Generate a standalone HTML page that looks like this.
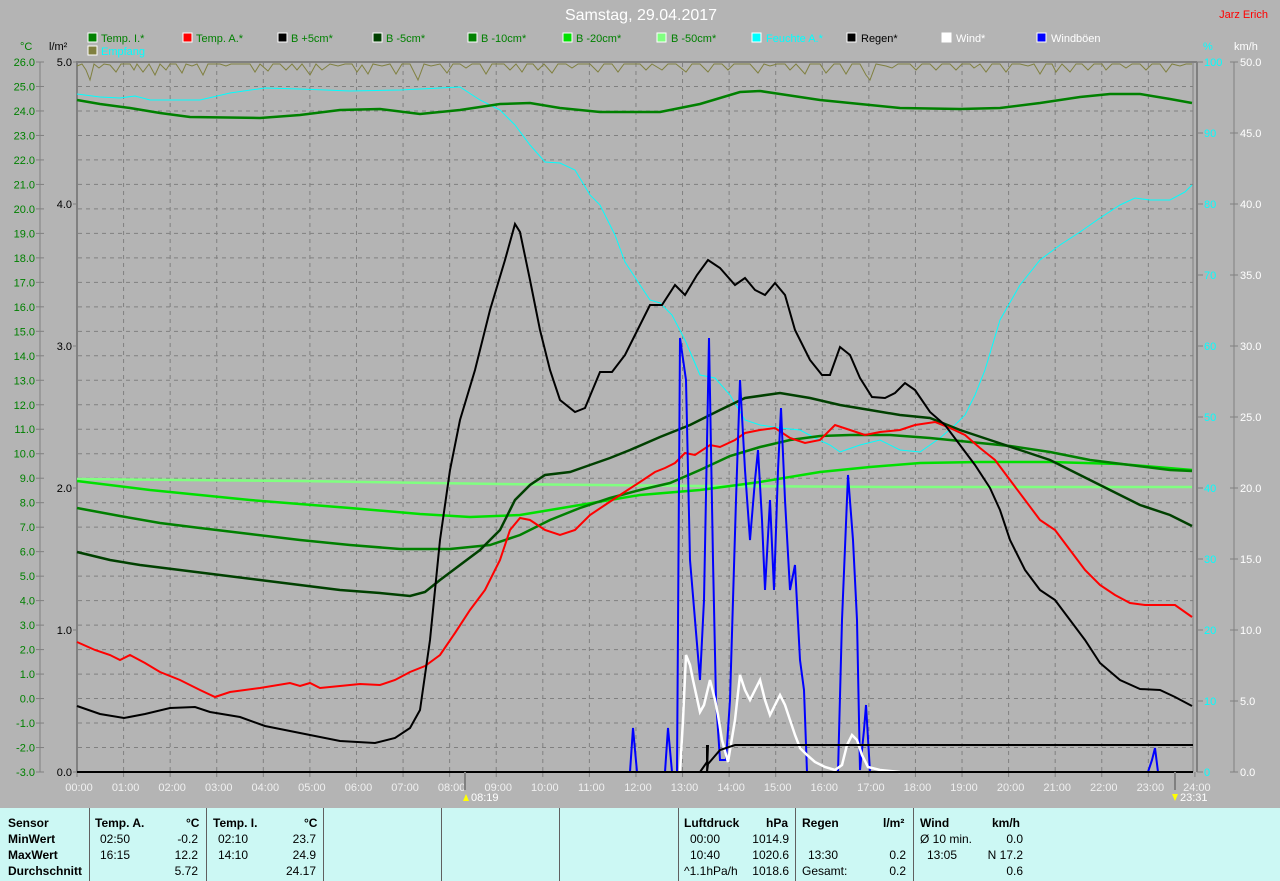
<!DOCTYPE html>
<html><head><meta charset="utf-8"><style>
body{margin:0;width:1280px;height:881px;background:#b4b4b4;overflow:hidden;font-family:"Liberation Sans",sans-serif}
svg{position:absolute;left:0;top:0}
.tb{position:absolute;left:0;top:808px;width:1280px;height:73px;background:#ccf8f4;font-size:12px;color:#000}
.tb div{position:absolute;white-space:nowrap}
.b{font-weight:bold}
.v{position:absolute;top:0;width:1px;height:73px;background:#606060}
</style></head><body>
<svg width="1280" height="881" font-family="Liberation Sans, sans-serif">
<text x="641" y="20" fill="#fff" font-size="16" text-anchor="middle">Samstag, 29.04.2017</text>
<text x="1268" y="18" fill="#f00" font-size="11" text-anchor="end">Jarz Erich</text>
<g font-size="11">
<rect x="88" y="33" width="9" height="9" fill="#008000" stroke="#fff"/><text x="101" y="42" fill="#008000">Temp. I.*</text>
<rect x="183" y="33" width="9" height="9" fill="#f00" stroke="#fff"/><text x="196" y="42" fill="#008000">Temp. A.*</text>
<rect x="278" y="33" width="9" height="9" fill="#000" stroke="#fff"/><text x="291" y="42" fill="#008000">B +5cm*</text>
<rect x="373" y="33" width="9" height="9" fill="#004000" stroke="#fff"/><text x="386" y="42" fill="#008000">B -5cm*</text>
<rect x="468" y="33" width="9" height="9" fill="#008000" stroke="#fff"/><text x="481" y="42" fill="#008000">B -10cm*</text>
<rect x="563" y="33" width="9" height="9" fill="#00e000" stroke="#fff"/><text x="576" y="42" fill="#008000">B -20cm*</text>
<rect x="657" y="33" width="9" height="9" fill="#80ff80" stroke="#fff"/><text x="671" y="42" fill="#008000">B -50cm*</text>
<rect x="752" y="33" width="9" height="9" fill="#0ff" stroke="#fff"/><text x="766" y="42" fill="#0ff">Feuchte A.*</text>
<rect x="847" y="33" width="9" height="9" fill="#000" stroke="#fff"/><text x="861" y="42" fill="#000">Regen*</text>
<rect x="942" y="33" width="9" height="9" fill="#fff" stroke="#fff"/><text x="956" y="42" fill="#fff">Wind*</text>
<rect x="1037" y="33" width="9" height="9" fill="#00f" stroke="#fff"/><text x="1051" y="42" fill="#fff">Windböen</text>
<rect x="88" y="46" width="9" height="9" fill="#808040" stroke="#fff"/><text x="101" y="55" fill="#0ff">Empfang</text>
<text x="20" y="50" fill="#008000">°C</text><text x="49" y="50" fill="#000">l/m²</text>
<text x="1203" y="50" fill="#0ff">%</text><text x="1234" y="50" fill="#fff">km/h</text>
</g>
<g id="grid" stroke="#808080" stroke-dasharray="4,4" stroke-width="1"></g>
<g stroke="#808080" stroke-width="1">
<line x1="40" y1="62" x2="40" y2="772"/>
<line x1="1234" y1="62" x2="1234" y2="772"/>
<line x1="1193" y1="62" x2="1193" y2="772"/>
</g>
<line x1="77" y1="61" x2="77" y2="772" stroke="#808080" stroke-width="2"/>
<line x1="77" y1="62" x2="1197" y2="62" stroke="#808080" stroke-width="2"/>
<line x1="1197" y1="62" x2="1197" y2="772" stroke="#808080" stroke-width="2"/>
<g id="ticks" stroke="#808080"></g>
<g id="labels" font-size="11"></g>
<polyline fill="none" stroke="#808040" stroke-width="1" points="77,66 82,64 86,70 90,80 94,64 99,68 104,64 110,65 116,72 121,64 130,64 134,70 137,64 143,72 149,64 155,75 160,64 166,70 170,64 176,64 182,73 186,64 192,66 197,64 203,75 208,64 220,64 226,66 231,64 240,64 250,64 255,72 260,64 268,71 273,64 280,64 286,70 292,64 297,70 302,64 310,75 316,64 322,70 330,64 338,66 345,64 352,64 357,72 362,65 368,74 373,64 382,66 390,64 396,74 402,64 410,64 418,80 424,64 431,66 440,64 447,73 453,64 460,64 466,68 472,64 480,64 486,74 492,64 498,64 504,64 510,70 516,64 522,72 527,64 533,64 538,70 544,64 552,73 558,64 566,64 572,68 578,64 590,64 598,72 604,64 612,64 618,72 624,64 634,64 640,64 646,70 652,64 662,70 668,64 676,64 686,72 692,64 700,64 708,72 714,64 722,64 728,70 734,64 750,64 758,73 764,64 770,66 777,64 785,64 790,70 796,64 805,74 810,64 820,64 826,73 834,64 840,64 846,74 852,64 860,64 866,75 870,80 876,64 886,66 892,68 898,64 910,64 916,70 922,64 930,64 936,70 942,64 950,64 956,70 962,64 970,64 974,68 980,64 986,72 992,64 1000,64 1006,72 1012,64 1020,64 1028,66 1034,64 1040,74 1046,64 1052,64 1056,72 1062,64 1070,72 1076,64 1082,64 1088,70 1094,64 1102,64 1106,70 1112,64 1120,64 1126,68 1132,64 1140,64 1146,70 1152,64 1160,64 1166,72 1172,64 1180,66 1186,64 1192,64"/>
<polyline fill="none" stroke="#0ff" stroke-width="1" points="77,94 100,97 120,98 135,96 150,100 200,100 230,93 265,88 300,89 350,91 400,90 440,88 460,87 480,100 500,110 515,125 530,145 545,162 560,163 575,170 590,195 600,205 615,235 625,262 640,285 650,300 660,303 672,315 685,340 700,375 715,378 730,395 745,420 760,425 780,428 800,430 815,438 830,445 840,452 860,445 880,440 900,450 920,452 940,438 955,425 965,415 975,395 985,370 1000,320 1020,285 1040,260 1060,245 1080,232 1100,218 1120,205 1135,198 1150,200 1170,200 1185,192 1192,185"/>
<polyline fill="none" stroke="#008000" stroke-width="2.5" points="77,100 100,104 130,108 160,113 190,117 260,118 300,115 340,110 380,109 420,114 460,110 500,104 530,103 560,108 600,112 660,112 700,104 740,92 760,91 780,94 820,100 860,104 900,108 960,109 1000,108 1040,103 1080,97 1110,94 1140,94 1170,99 1192,103"/>
<polyline fill="none" stroke="#80ff80" stroke-width="2.5" points="77,479 300,481 500,484 700,486 900,487 1192,487"/>
<polyline fill="none" stroke="#00e000" stroke-width="2.5" points="77,481 150,490 250,500 350,508 420,514 470,517 520,515 580,505 640,495 700,490 760,482 820,472 870,467 920,463 980,462 1050,462 1120,464 1192,470"/>
<polyline fill="none" stroke="#008000" stroke-width="2.5" points="77,508 120,516 160,523 200,528 250,534 300,540 350,545 400,549 450,549 490,545 520,535 550,520 580,508 610,498 640,490 670,483 700,470 730,456 760,447 790,440 820,436 850,435 890,435 930,438 970,442 1010,446 1050,452 1090,460 1130,465 1170,470 1192,471"/>
<polyline fill="none" stroke="#004000" stroke-width="2.5" points="77,552 110,560 140,565 180,570 220,575 260,580 300,585 340,590 380,593 410,596 425,592 440,580 460,565 480,550 500,530 515,500 530,485 545,475 570,472 590,465 610,458 630,450 660,437 690,425 720,410 745,398 780,393 810,398 840,405 870,410 900,415 930,418 960,430 990,440 1020,450 1050,460 1080,475 1110,490 1140,505 1170,515 1192,526"/>
<polyline fill="none" stroke="#f00" stroke-width="2" points="77,642 95,650 110,655 120,660 130,655 145,663 160,672 180,680 200,690 215,697 230,692 260,688 290,683 300,686 310,683 320,688 340,686 360,684 380,685 395,680 410,672 425,666 440,655 455,633 470,610 485,590 500,560 510,530 520,518 530,520 545,530 560,535 575,530 590,515 605,505 620,495 640,482 655,472 665,468 675,463 685,453 695,455 710,445 720,447 735,440 745,433 760,430 775,428 790,438 805,443 820,440 835,425 850,430 865,435 880,432 900,430 915,425 935,422 950,428 965,435 980,448 995,460 1010,480 1025,500 1040,520 1055,530 1070,550 1085,570 1100,585 1115,595 1130,603 1145,605 1160,605 1175,605 1192,617"/>
<polyline fill="none" stroke="#000" stroke-width="2" points="77,706 100,714 124,718 145,714 170,708 195,707 210,712 240,717 265,726 300,733 340,741 375,743 395,738 410,728 420,710 430,640 440,540 450,470 460,420 475,370 490,310 505,260 515,224 520,232 530,280 540,330 550,370 560,400 575,412 585,408 600,372 612,372 625,355 635,335 650,305 662,305 675,285 685,295 697,275 708,260 720,268 735,285 745,278 755,290 765,295 775,283 785,295 795,330 810,360 822,375 830,375 840,347 850,355 860,378 872,397 885,398 895,393 905,383 915,390 930,412 945,425 960,445 975,465 990,488 1000,510 1010,540 1025,570 1040,590 1055,600 1070,620 1085,640 1100,663 1120,680 1140,689 1160,690 1175,697 1192,706"/>
<polyline fill="none" stroke="#00f" stroke-width="2" points="630,772 633,728 637,772 665,772 668,728 672,772 677,772 680,338 686,380 690,560 695,620 700,680 704,600 709,338 713,560 716,700 720,760 726,760 730,700 736,500 740,380 745,470 750,540 755,480 758,450 762,520 765,590 770,500 774,590 778,470 781,408 785,500 790,590 795,565 800,660 804,690 807,772 838,772 842,620 848,475 853,540 857,620 860,770 864,730 866,705 870,772 1148,772 1152,760 1155,748 1158,772 1192,772"/>
<polyline fill="none" stroke="#fff" stroke-width="2.5" points="680,772 683,720 686,655 690,665 693,680 700,712 704,705 710,680 715,700 718,715 722,740 728,762 735,720 740,675 745,690 750,700 755,690 760,680 765,700 770,715 775,705 780,695 785,705 790,720 795,735 800,748 807,755 815,762 825,767 835,770 842,765 847,745 852,735 857,740 862,755 868,767 880,770 900,772"/>
<line x1="77" y1="772" x2="1193" y2="772" stroke="#000" stroke-width="2"/>
<polyline fill="none" stroke="#000" stroke-width="2" points="700,772 707,762 708,745 707,772 708,764 720,750 735,745 1193,745"/>
<line x1="707" y1="745" x2="707" y2="760" stroke="#000" stroke-width="2"/>
<line x1="465" y1="772" x2="465" y2="790" stroke="#808080" stroke-width="2"/>
<line x1="1175" y1="772" x2="1175" y2="790" stroke="#808080" stroke-width="2"/>
<text x="471" y="801" fill="#fff" font-size="11">08:19</text>
<text x="1180" y="801" fill="#fff" font-size="11">23:31</text>
<polygon points="463,801 466,794 469,801" fill="#ff0"/>
<polygon points="1172,794 1175,801 1178,794" fill="#ff0"/>
</svg>
<div class="tb">
<div class="v" style="left:89px"></div><div class="v" style="left:206px"></div><div class="v" style="left:323px"></div><div class="v" style="left:441px"></div><div class="v" style="left:559px"></div><div class="v" style="left:678px"></div><div class="v" style="left:795px"></div><div class="v" style="left:913px"></div>
<div class="b" style="left:8px;top:8px">Sensor</div><div class="b" style="left:8px;top:24px">MinWert</div><div class="b" style="left:8px;top:40px">MaxWert</div><div class="b" style="left:8px;top:56px">Durchschnitt</div>
<div class="b" style="left:95px;top:8px">Temp. A.</div><div class="b" style="left:186px;top:8px">°C</div>
<div style="left:100px;top:24px">02:50</div><div style="left:100px;top:40px">16:15</div>
<div style="right:1082px;top:24px">-0.2</div><div style="right:1082px;top:40px">12.2</div><div style="right:1082px;top:56px">5.72</div>
<div class="b" style="left:213px;top:8px">Temp. I.</div><div class="b" style="left:304px;top:8px">°C</div>
<div style="left:218px;top:24px">02:10</div><div style="left:218px;top:40px">14:10</div>
<div style="right:964px;top:24px">23.7</div><div style="right:964px;top:40px">24.9</div><div style="right:964px;top:56px">24.17</div>
<div class="b" style="left:684px;top:8px">Luftdruck</div><div class="b" style="left:766px;top:8px">hPa</div>
<div style="left:690px;top:24px">00:00</div><div style="left:690px;top:40px">10:40</div><div style="left:684px;top:56px">^1.1hPa/h</div>
<div style="right:491px;top:24px">1014.9</div><div style="right:491px;top:40px">1020.6</div><div style="right:491px;top:56px">1018.6</div>
<div class="b" style="left:802px;top:8px">Regen</div><div class="b" style="left:883px;top:8px">l/m²</div>
<div style="left:808px;top:40px">13:30</div><div style="left:802px;top:56px">Gesamt:</div>
<div style="right:374px;top:40px">0.2</div><div style="right:374px;top:56px">0.2</div>
<div class="b" style="left:920px;top:8px">Wind</div><div class="b" style="left:992px;top:8px">km/h</div>
<div style="left:920px;top:24px">Ø 10 min.</div><div style="left:927px;top:40px">13:05</div>
<div style="right:257px;top:24px">0.0</div><div style="right:257px;top:40px">N 17.2</div><div style="right:257px;top:56px">0.6</div>
</div>
<script>
var ns="http://www.w3.org/2000/svg";
function el(p,t,a,txt){var e=document.createElementNS(ns,t);for(var k in a)e.setAttribute(k,a[k]);if(txt!==undefined)e.textContent=txt;document.getElementById(p).appendChild(e);}
var px=46.58,py=24.483;
for(var k=1;k<29;k++){var y=62+k*py;el("grid","line",{x1:78,x2:1193,y1:y,y2:y});}
for(var h=1;h<24;h++){var x=77+h*px;el("grid","line",{x1:x,x2:x,y1:63,y2:772});}
for(var k=0;k<=29;k++){var y=62+k*py;el("ticks","line",{x1:36,x2:44,y1:y,y2:y});var t=(26-k).toFixed(1);el("labels","text",{x:35,y:y+4,fill:"#008000","text-anchor":"end"},t);}
for(var k=0;k<=5;k++){var y=62+k*142;el("ticks","line",{x1:73,x2:77,y1:y,y2:y});el("labels","text",{x:72,y:y+4,fill:"#000","text-anchor":"end"},(5-k).toFixed(1));}
for(var k=0;k<=10;k++){var y=62+k*71;el("ticks","line",{x1:1197,x2:1203,y1:y,y2:y});el("ticks","line",{x1:1230,x2:1238,y1:y,y2:y});el("labels","text",{x:1204,y:y+4,fill:"#0ff"},String(100-k*10));el("labels","text",{x:1240,y:y+4,fill:"#fff"},(50-k*5).toFixed(1));}
for(var h=0;h<=24;h++){var x=77+h*px;el("ticks","line",{x1:x,x2:x,y1:772,y2:777});el("labels","text",{x:x+2,y:791,fill:"#f0f0f0","text-anchor":"middle"},(h<10?"0":"")+h+":00");}
</script>
</body></html>
